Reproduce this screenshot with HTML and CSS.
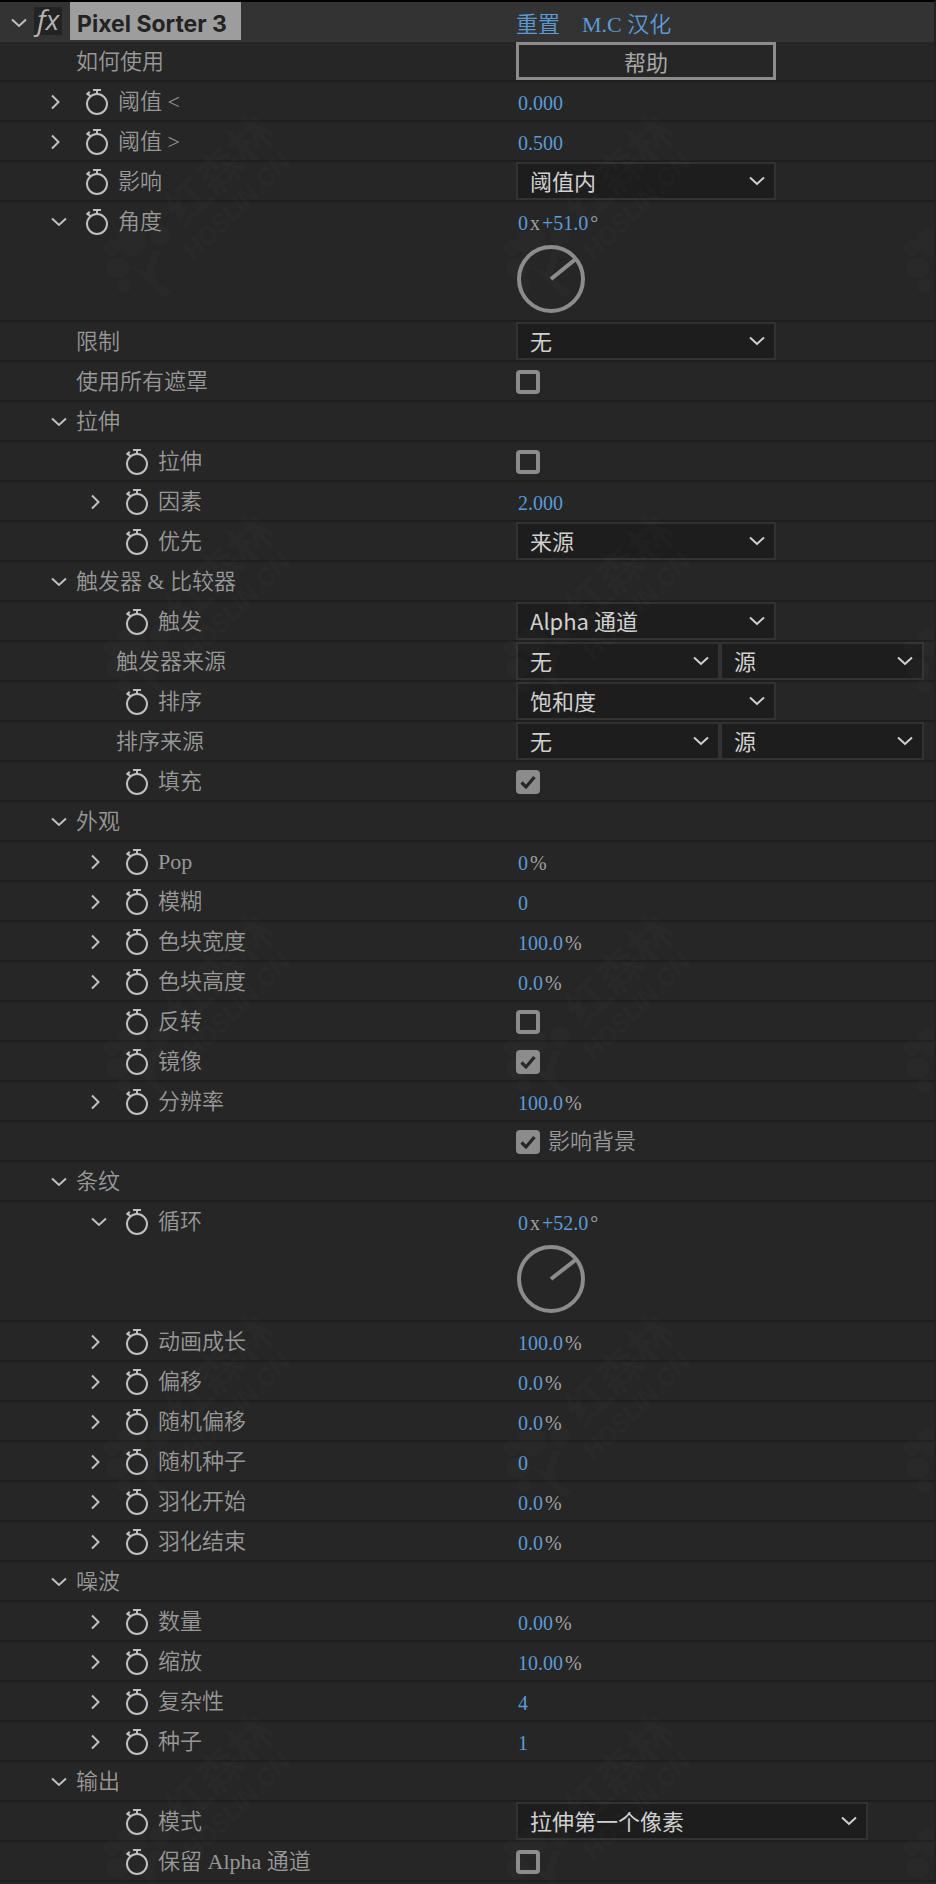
FILE: index.html
```html
<!DOCTYPE html>
<html lang="zh-CN">
<head>
    <meta charset="utf-8">
    <title>Pixel Sorter 3</title>
    <link rel="stylesheet" href="styles.css">
</head>
<body>
<svg class="sprites" aria-hidden="true">
    <symbol id="down" viewBox="0 0 16 10"><path d="M1 1.5 8 8l7-6.500" fill="none" stroke="currentColor" stroke-width="2"/></symbol>
    <symbol id="right" viewBox="0 0 10 16"><path d="M1 1.500 7.500 8 1 14.500" fill="none" stroke="currentColor" stroke-width="2"/></symbol>
    <symbol id="stopwatch" viewBox="0 0 24 28">
        <circle cx="12" cy="16" r="10" fill="none" stroke="currentColor" stroke-width="2"/>
        <path d="M8 2h8M12 2v4M2 5l3.500 3.500" fill="none" stroke="currentColor" stroke-width="2"/>
        <path d="M1 6l3-3 1.500 1.500-3 3z" fill="currentColor"/>
    </symbol>
</svg>

<main class="panel">
    <header class="row header">
        <div class="name">
            <button class="twirl" aria-label="Pixel Sorter 3"><svg class="down"><use href="#down"/></svg></button>
            <span class="fx">fx</span>
            <h1>Pixel Sorter 3</h1>
        </div>
        <div class="value links"><a href="#">重置</a><a href="#">M.C 汉化</a></div>
    </header>

    <div class="row">
        <div class="name plain"><span>如何使用</span></div>
        <div class="value"><button class="help">帮助</button></div>
    </div>
    <div class="row">
        <div class="name"><button class="twirl" aria-label="阈值 &lt;"><svg class="right"><use href="#right"/></svg></button><button class="watch" aria-label="阈值 &lt;"><svg><use href="#stopwatch"/></svg></button><span>阈值 &lt;</span></div>
        <div class="value"><button class="num">0.000</button></div>
    </div>
    <div class="row">
        <div class="name"><button class="twirl" aria-label="阈值 &gt;"><svg class="right"><use href="#right"/></svg></button><button class="watch" aria-label="阈值 &gt;"><svg><use href="#stopwatch"/></svg></button><span>阈值 &gt;</span></div>
        <div class="value"><button class="num">0.500</button></div>
    </div>
    <div class="row">
        <div class="name"><button class="watch" aria-label="影响"><svg><use href="#stopwatch"/></svg></button><label for="affect">影响</label></div>
        <div class="value"><select id="affect"><option>阈值内</option></select></div>
    </div>
    <div class="row tall">
        <div class="name"><button class="twirl" aria-label="角度"><svg class="down"><use href="#down"/></svg></button><button class="watch" aria-label="角度"><svg><use href="#stopwatch"/></svg></button><span>角度</span></div>
        <div class="value"><button class="num">0</button><span class="unit">x</span><button class="num">+51.0</button><span class="unit">°</span></div>
        <svg class="dial" viewBox="0 0 68 68"><circle cx="34" cy="34" r="32"/><path d="M34 34 58.900 13.900"/></svg>
    </div>
    <div class="row">
        <div class="name plain"><label for="limit">限制</label></div>
        <div class="value"><select id="limit"><option>无</option></select></div>
    </div>
    <div class="row">
        <div class="name plain"><label for="masks">使用所有遮罩</label></div>
        <div class="value"><input type="checkbox" id="masks"></div>
    </div>

    <div class="row">
        <div class="name group"><button class="twirl" aria-label="拉伸"><svg class="down"><use href="#down"/></svg></button><span>拉伸</span></div>
    </div>
    <div class="row sub">
        <div class="name"><button class="watch" aria-label="拉伸"><svg><use href="#stopwatch"/></svg></button><label for="stretch">拉伸</label></div>
        <div class="value"><input type="checkbox" id="stretch"></div>
    </div>
    <div class="row sub">
        <div class="name"><button class="twirl" aria-label="因素"><svg class="right"><use href="#right"/></svg></button><button class="watch" aria-label="因素"><svg><use href="#stopwatch"/></svg></button><span>因素</span></div>
        <div class="value"><button class="num">2.000</button></div>
    </div>
    <div class="row sub">
        <div class="name"><button class="watch" aria-label="优先"><svg><use href="#stopwatch"/></svg></button><label for="priority">优先</label></div>
        <div class="value"><select id="priority"><option>来源</option></select></div>
    </div>

    <div class="row">
        <div class="name group"><button class="twirl" aria-label="触发器 &amp; 比较器"><svg class="down"><use href="#down"/></svg></button><span>触发器 &amp; 比较器</span></div>
    </div>
    <div class="row sub">
        <div class="name"><button class="watch" aria-label="触发"><svg><use href="#stopwatch"/></svg></button><label for="trigger">触发</label></div>
        <div class="value"><select id="trigger"><option>Alpha 通道</option></select></div>
    </div>
    <div class="row sub">
        <div class="name plain"><label for="trigger-source">触发器来源</label></div>
        <div class="value"><select id="trigger-source" class="half"><option>无</option></select><select class="half" aria-label="触发器来源"><option>源</option></select></div>
    </div>
    <div class="row sub">
        <div class="name"><button class="watch" aria-label="排序"><svg><use href="#stopwatch"/></svg></button><label for="sort">排序</label></div>
        <div class="value"><select id="sort"><option>饱和度</option></select></div>
    </div>
    <div class="row sub">
        <div class="name plain"><label for="sort-source">排序来源</label></div>
        <div class="value"><select id="sort-source" class="half"><option>无</option></select><select class="half" aria-label="排序来源"><option>源</option></select></div>
    </div>
    <div class="row sub">
        <div class="name"><button class="watch" aria-label="填充"><svg><use href="#stopwatch"/></svg></button><label for="fill">填充</label></div>
        <div class="value"><input type="checkbox" id="fill" checked></div>
    </div>

    <div class="row">
        <div class="name group"><button class="twirl" aria-label="外观"><svg class="down"><use href="#down"/></svg></button><span>外观</span></div>
    </div>
    <div class="row sub">
        <div class="name"><button class="twirl" aria-label="Pop"><svg class="right"><use href="#right"/></svg></button><button class="watch" aria-label="Pop"><svg><use href="#stopwatch"/></svg></button><span>Pop</span></div>
        <div class="value"><button class="num">0</button><span class="unit">%</span></div>
    </div>
    <div class="row sub">
        <div class="name"><button class="twirl" aria-label="模糊"><svg class="right"><use href="#right"/></svg></button><button class="watch" aria-label="模糊"><svg><use href="#stopwatch"/></svg></button><span>模糊</span></div>
        <div class="value"><button class="num">0</button></div>
    </div>
    <div class="row sub">
        <div class="name"><button class="twirl" aria-label="色块宽度"><svg class="right"><use href="#right"/></svg></button><button class="watch" aria-label="色块宽度"><svg><use href="#stopwatch"/></svg></button><span>色块宽度</span></div>
        <div class="value"><button class="num">100.0</button><span class="unit">%</span></div>
    </div>
    <div class="row sub">
        <div class="name"><button class="twirl" aria-label="色块高度"><svg class="right"><use href="#right"/></svg></button><button class="watch" aria-label="色块高度"><svg><use href="#stopwatch"/></svg></button><span>色块高度</span></div>
        <div class="value"><button class="num">0.0</button><span class="unit">%</span></div>
    </div>
    <div class="row sub">
        <div class="name"><button class="watch" aria-label="反转"><svg><use href="#stopwatch"/></svg></button><label for="invert">反转</label></div>
        <div class="value"><input type="checkbox" id="invert"></div>
    </div>
    <div class="row sub">
        <div class="name"><button class="watch" aria-label="镜像"><svg><use href="#stopwatch"/></svg></button><label for="mirror">镜像</label></div>
        <div class="value"><input type="checkbox" id="mirror" checked></div>
    </div>
    <div class="row sub">
        <div class="name"><button class="twirl" aria-label="分辨率"><svg class="right"><use href="#right"/></svg></button><button class="watch" aria-label="分辨率"><svg><use href="#stopwatch"/></svg></button><span>分辨率</span></div>
        <div class="value"><button class="num">100.0</button><span class="unit">%</span></div>
    </div>
    <div class="row sub">
        <div class="name"></div>
        <div class="value"><input type="checkbox" id="background" checked><label for="background">影响背景</label></div>
    </div>

    <div class="row">
        <div class="name group"><button class="twirl" aria-label="条纹"><svg class="down"><use href="#down"/></svg></button><span>条纹</span></div>
    </div>
    <div class="row sub tall">
        <div class="name"><button class="twirl" aria-label="循环"><svg class="down"><use href="#down"/></svg></button><button class="watch" aria-label="循环"><svg><use href="#stopwatch"/></svg></button><span>循环</span></div>
        <div class="value"><button class="num">0</button><span class="unit">x</span><button class="num">+52.0</button><span class="unit">°</span></div>
        <svg class="dial" viewBox="0 0 68 68"><circle cx="34" cy="34" r="32"/><path d="M34 34 59.200 14.300"/></svg>
    </div>
    <div class="row sub">
        <div class="name"><button class="twirl" aria-label="动画成长"><svg class="right"><use href="#right"/></svg></button><button class="watch" aria-label="动画成长"><svg><use href="#stopwatch"/></svg></button><span>动画成长</span></div>
        <div class="value"><button class="num">100.0</button><span class="unit">%</span></div>
    </div>
    <div class="row sub">
        <div class="name"><button class="twirl" aria-label="偏移"><svg class="right"><use href="#right"/></svg></button><button class="watch" aria-label="偏移"><svg><use href="#stopwatch"/></svg></button><span>偏移</span></div>
        <div class="value"><button class="num">0.0</button><span class="unit">%</span></div>
    </div>
    <div class="row sub">
        <div class="name"><button class="twirl" aria-label="随机偏移"><svg class="right"><use href="#right"/></svg></button><button class="watch" aria-label="随机偏移"><svg><use href="#stopwatch"/></svg></button><span>随机偏移</span></div>
        <div class="value"><button class="num">0.0</button><span class="unit">%</span></div>
    </div>
    <div class="row sub">
        <div class="name"><button class="twirl" aria-label="随机种子"><svg class="right"><use href="#right"/></svg></button><button class="watch" aria-label="随机种子"><svg><use href="#stopwatch"/></svg></button><span>随机种子</span></div>
        <div class="value"><button class="num">0</button></div>
    </div>
    <div class="row sub">
        <div class="name"><button class="twirl" aria-label="羽化开始"><svg class="right"><use href="#right"/></svg></button><button class="watch" aria-label="羽化开始"><svg><use href="#stopwatch"/></svg></button><span>羽化开始</span></div>
        <div class="value"><button class="num">0.0</button><span class="unit">%</span></div>
    </div>
    <div class="row sub">
        <div class="name"><button class="twirl" aria-label="羽化结束"><svg class="right"><use href="#right"/></svg></button><button class="watch" aria-label="羽化结束"><svg><use href="#stopwatch"/></svg></button><span>羽化结束</span></div>
        <div class="value"><button class="num">0.0</button><span class="unit">%</span></div>
    </div>

    <div class="row">
        <div class="name group"><button class="twirl" aria-label="噪波"><svg class="down"><use href="#down"/></svg></button><span>噪波</span></div>
    </div>
    <div class="row sub">
        <div class="name"><button class="twirl" aria-label="数量"><svg class="right"><use href="#right"/></svg></button><button class="watch" aria-label="数量"><svg><use href="#stopwatch"/></svg></button><span>数量</span></div>
        <div class="value"><button class="num">0.00</button><span class="unit">%</span></div>
    </div>
    <div class="row sub">
        <div class="name"><button class="twirl" aria-label="缩放"><svg class="right"><use href="#right"/></svg></button><button class="watch" aria-label="缩放"><svg><use href="#stopwatch"/></svg></button><span>缩放</span></div>
        <div class="value"><button class="num">10.00</button><span class="unit">%</span></div>
    </div>
    <div class="row sub">
        <div class="name"><button class="twirl" aria-label="复杂性"><svg class="right"><use href="#right"/></svg></button><button class="watch" aria-label="复杂性"><svg><use href="#stopwatch"/></svg></button><span>复杂性</span></div>
        <div class="value"><button class="num">4</button></div>
    </div>
    <div class="row sub">
        <div class="name"><button class="twirl" aria-label="种子"><svg class="right"><use href="#right"/></svg></button><button class="watch" aria-label="种子"><svg><use href="#stopwatch"/></svg></button><span>种子</span></div>
        <div class="value"><button class="num">1</button></div>
    </div>

    <div class="row">
        <div class="name group"><button class="twirl" aria-label="输出"><svg class="down"><use href="#down"/></svg></button><span>输出</span></div>
    </div>
    <div class="row sub">
        <div class="name"><button class="watch" aria-label="模式"><svg><use href="#stopwatch"/></svg></button><label for="mode">模式</label></div>
        <div class="value"><select id="mode" class="wide"><option>拉伸第一个像素</option></select></div>
    </div>
    <div class="row sub">
        <div class="name"><button class="watch" aria-label="保留 Alpha 通道"><svg><use href="#stopwatch"/></svg></button><label for="keep-alpha">保留 Alpha 通道</label></div>
        <div class="value"><input type="checkbox" id="keep-alpha"></div>
    </div>

    <!-- 水印 -->
    <svg class="watermark" aria-hidden="true">
        <pattern id="mark" width="400" height="400" patternUnits="userSpaceOnUse">
            <circle cx="112" cy="246" r="8"/><circle cx="132" cy="240" r="14"/><circle cx="160" cy="234" r="10"/>
            <circle cx="118" cy="266" r="11"/><circle cx="124" cy="284" r="7"/>
            <path d="M162 246l-8 20 4 16 14 8-8 6-18-18-16-14 16 6 6-22z"/>
            <text class="mark-cn" transform="translate(184 226) rotate(-45)">红森林</text>
            <text class="mark-en" transform="translate(194 260) rotate(-45)">HOSLIN.CN</text>
        </pattern>
        <rect width="100%" height="100%" fill="url(#mark)"/>
    </svg>
</main>
</body>
</html>
```
FILE: styles.css
```css
* {
    box-sizing: border-box;
}
body {
    margin: 0;
    background: #262626;
    color: #989898;
    font-family: "Liberation Serif", "Noto Sans CJK SC", serif;
    font-size: 22px;
    font-weight: 350;
    line-height: 28px;
}
.sprites {
    display: none;
}
.panel {
    position: relative;
    border-top: 2px solid #000;
    border-right: 2px solid #222;
}
.row {
    display: grid;
    grid-template-columns: minmax(0, 516px) minmax(0, 1fr);
    grid-template-rows: 38px;
    border-bottom: 2px solid #1e1e1e;
}
.header {
    background: #333;
    border-bottom-color: #333;
}
.name {
    display: grid;
    grid-template-columns: 34px 33px 1fr;
    align-items: center;
    padding-left: 51px;
    white-space: nowrap;
}
.sub .name {
    padding-left: 91px;
}
.name span,
.name label {
    grid-column: 3;
    padding-top: 2px;
}
.name.plain,
.name.group {
    grid-template-columns: 25px 1fr;
}
.name.plain span,
.name.plain label,
.name.group span {
    grid-column: 2;
}
button {
    background: none;
    border: none;
    padding: 0;
    color: inherit;
    font: inherit;
    cursor: pointer;
}
.twirl,
.watch {
    display: flex;
    padding-top: 2px;
    color: #c0c0c0;
}
.watch {
    grid-column: 2;
}
.down {
    width: 16px;
    height: 10px;
}
.right {
    width: 10px;
    height: 16px;
}
.watch svg {
    width: 24px;
    height: 28px;
}

/* header */
.header .name {
    display: flex;
    padding-left: 11px;
}
.header .twirl {
    width: 23px;
    padding-top: 4px;
}
.name .fx {
    width: 28px;
    height: 28px;
    margin-right: 8px;
    padding: 0;
    background: #232323;
    color: #b4b4b4;
    font: italic 28px/24px "Open Sans", sans-serif;
    text-align: center;
}
h1 {
    margin: 0;
    padding: 5px 14px 0 7px;
    height: 38px;
    background: #9d9d9d;
    color: #232323;
    font: bold 23px/34px Inter, sans-serif;
}
.links {
    gap: 22px;
    padding-top: 8px;
}
a {
    color: #5b9bd8;
    text-decoration: none;
}

/* values */
.value {
    display: flex;
    align-items: center;
}
.value label {
    padding-top: 2px;
}
.num,
.unit {
    padding-top: 3px;
    font-size: 20px;
}
.num {
    color: #5b9bd8;
}
.num:first-child {
    margin-left: 2px;
}
.unit {
    margin: 0 2px;
    color: #a0a0a0;
}
.help {
    width: 260px;
    height: 38px;
    padding-bottom: 2px;
    border: 3px solid #8c8c8c;
    color: #a8a8a8;
    font: 22px "Noto Sans CJK SC", sans-serif;
}
select {
    appearance: none;
    width: 260px;
    height: 38px;
    padding: 0 40px 2px 12px;
    border: 2px solid #323232;
    border-radius: 0;
    background: #1d1d1d url("data:image/svg+xml,%3Csvg xmlns='http://www.w3.org/2000/svg' width='16' height='10'%3E%3Cpath d='M1 1.5 8 8l7-6.5' fill='none' stroke='%23d0d0d0' stroke-width='2'/%3E%3C/svg%3E") no-repeat right 9px center;
    color: #d0d0d0;
    font: 22px "Noto Sans CJK SC", sans-serif;
}
.half {
    width: 204px;
}
.wide {
    width: 352px;
}
input[type="checkbox"] {
    appearance: none;
    width: 24px;
    height: 24px;
    margin: 2px 8px 0 0;
    border: 4px solid #8c8c8c;
    border-radius: 4px;
}
input[type="checkbox"]:checked {
    background: #8c8c8c url("data:image/svg+xml,%3Csvg xmlns='http://www.w3.org/2000/svg' width='16' height='16'%3E%3Cpath d='M1.500 8.500 6 13 14.500 3' fill='none' stroke='%23262626' stroke-width='3.200'/%3E%3C/svg%3E") center no-repeat;
}
.tall {
    grid-template-rows: 38px 80px;
}
.dial {
    grid-column: 2;
    width: 68px;
    height: 68px;
    margin: 5px 1px;
    fill: none;
    stroke: #8c8c8c;
    stroke-width: 4;
}

.watermark {
    position: absolute;
    top: 0;
    left: 0;
    width: 100%;
    height: 100%;
    pointer-events: none;
    fill: #fff;
    opacity: 0.012;
}
.mark-cn {
    font: bold 44px "Noto Sans CJK SC", sans-serif;
}
.mark-en {
    font: italic bold 25px Inter, sans-serif;
}
```
